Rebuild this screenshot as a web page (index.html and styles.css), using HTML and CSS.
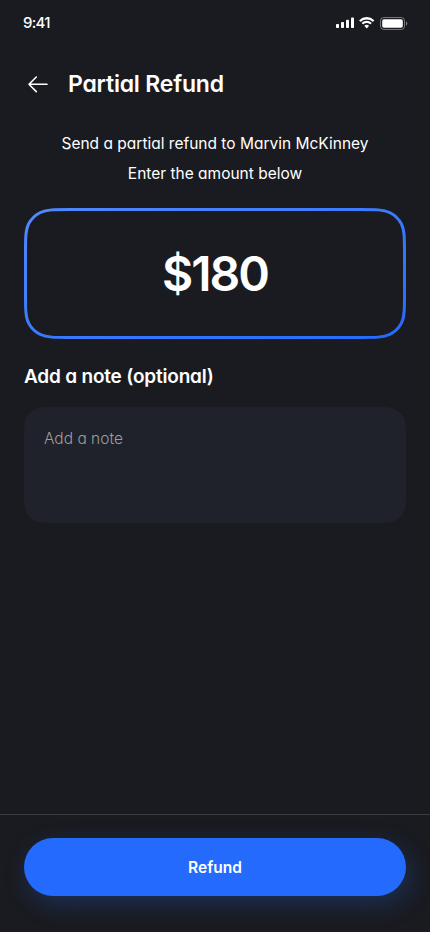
FILE: index.html
```html
<!DOCTYPE html>
<html lang="en">
<head>
<meta charset="utf-8">
<meta name="viewport" content="width=device-width, initial-scale=1">
<title>Partial Refund</title>
<link rel="stylesheet" href="styles.css">
</head>
<body>
<div class="screen">
  <header class="status">
    <span class="time">9:41</span>
    <svg class="status-icons" width="72" height="14" viewBox="0 0 72 14" fill="#fff">
      <rect x="0" y="8" width="3" height="4" rx=".8"/>
      <rect x="5" y="6" width="3" height="6" rx=".8"/>
      <rect x="10" y="3.7" width="3" height="8.3" rx=".8"/>
      <rect x="15" y="1.4" width="3" height="10.6" rx=".8"/>
      <path d="M30.7 3.4c2.2 0 4.3.85 5.9 2.35.12.12.3.12.43 0L38.2 4.6a.32.32 0 0 0 0-.46 10.8 10.8 0 0 0-15 0 .32.32 0 0 0 0 .46l1.17 1.15c.12.12.3.12.43 0A8.6 8.6 0 0 1 30.7 3.4Z"/>
      <path d="M30.7 7.1c1.2 0 2.37.45 3.26 1.25.12.12.32.12.44 0l1.15-1.17a.32.32 0 0 0 0-.47 7.1 7.1 0 0 0-9.7 0 .32.32 0 0 0 0 .47L27 8.35c.12.12.32.12.44 0A4.9 4.9 0 0 1 30.7 7.1Z"/>
      <path d="M32.95 9.65a.3.3 0 0 1 0 .46l-2 2.03a.33.33 0 0 1-.46 0l-2-2.03a.3.3 0 0 1 0-.46 3.45 3.45 0 0 1 4.46 0Z"/>
      <rect x="44.5" y="1.5" width="24" height="12" rx="3.3" fill="none" stroke="#fff" stroke-opacity=".4"/>
      <rect x="46.2" y="3.2" width="20.6" height="8.6" rx="1.8"/>
      <path d="M70 5.6v4c.8-.35 1.3-1.1 1.3-2s-.5-1.650-1.3-2Z" opacity=".45"/>
    </svg>
  </header>
  <nav class="titlebar">
    <svg width="20" height="18" viewBox="0 0 20 18" fill="none" stroke="#fff" stroke-width="1.6" stroke-linecap="round" stroke-linejoin="round">
      <path d="M19 9.300H1M8.300 2 1 9.300 8.300 16.600"/>
    </svg>
    <h1>Partial Refund</h1>
  </nav>
  <main>
    <p class="intro"><span class="line-one">Send a partial refund to Marvin McKinney</span><span class="line-two">Enter the amount below</span></p>
    <section class="amount">
      <svg class="shape" width="382" height="131" viewBox="0 0 382 131" fill="none">
        <defs><linearGradient id="edge" x1="1" y1="1" x2="0" y2="0"><stop stop-color="#246bfd"/><stop offset="1" stop-color="#5089ff"/></linearGradient></defs>
        <path stroke="url(#edge)" stroke-width="3" d="M1.500 46C1.500 30 1.500 22 4.600 15.900C7.300 10.800 11.300 7 16.400 4.500C22.500 1.500 30.500 1.500 46 1.500H336C351.500 1.500 359.500 1.500 365.600 4.500C370.700 7 374.700 10.800 377.400 15.900C380.500 22 380.500 30 380.500 46V85C380.500 101 380.500 109 377.400 115.100C374.700 120.200 370.700 124 365.600 126.500C359.500 129.500 351.500 129.500 336 129.500H46C30.500 129.500 22.500 129.500 16.400 126.500C11.300 124 7.300 120.200 4.600 115.100C1.500 109 1.500 101 1.500 85Z"/>
      </svg>
      <span class="value">$180</span>
    </section>
    <h2>Add a note (optional)</h2>
    <section class="note">
      <svg class="shape" width="382" height="116" viewBox="0 0 382 116">
        <path fill="#1f222a" d="M0 32C0 20.800 0 15.200 2.180 10.920C4.100 7.160 7.160 4.100 10.920 2.180C15.200 0 20.800 0 32 0H350C361.200 0 366.800 0 371.080 2.180C374.840 4.100 377.900 7.160 379.820 10.920C382 15.200 382 20.800 382 32V84C382 95.200 382 100.800 379.820 105.080C377.900 108.840 374.840 111.900 371.080 113.820C366.800 116 361.200 116 350 116H32C20.800 116 15.200 116 10.920 113.820C7.160 111.900 4.100 108.840 2.180 105.080C0 100.800 0 95.200 0 84Z"/>
      </svg>
      <span class="placeholder">Add a note</span>
    </section>
  </main>
  <footer>
    <button class="refund" type="button"><span>Refund</span></button>
  </footer>
</div>
</body>
</html>
```
FILE: styles.css
```css
* { box-sizing: border-box; }
body { margin: 0; background: #1a1b20; }
.screen {
  width: 430px;
  height: 932px;
  display: flex;
  flex-direction: column;
  overflow: hidden;
  background: #1a1b20;
  color: #fff;
  font-family: Inter, Lato, sans-serif;
  font-feature-settings: "cv11";
}
.status {
  height: 44px;
  padding: 1px 22px 0 23px;
  display: flex;
  align-items: center;
  justify-content: space-between;
}
.time { font-size: 15px; font-weight: 500; letter-spacing: -0.7px; }
.status-icons { display: block; }
.titlebar {
  height: 80px;
  padding-left: 28px;
  display: flex;
  align-items: center;
  gap: 20px;
}
h1 { margin: 0; font-size: 23px; line-height: 30px; font-weight: 600; letter-spacing: -0.2px; white-space: nowrap; }
main { flex: 1; padding: 5px 24px 0; }
.intro { margin: 0; font-size: 15.5px; line-height: 30px; font-weight: 400; text-align: center; }
.intro span { display: block; white-space: nowrap; }
.line-one { letter-spacing: 0; }
.amount {
  position: relative;
  height: 131px;
  margin-top: 19px;
  display: flex;
  align-items: center;
  justify-content: center;
}
.shape { position: absolute; inset: 0; display: block; }
.value { position: relative; font-size: 48px; font-weight: 600; letter-spacing: -2px; }
h2 { margin: 24px 0 0; height: 44px; font-size: 19px; line-height: 28px; font-weight: 600; letter-spacing: -0.2px; white-space: nowrap; }
h2, .placeholder { text-align: left; }
.note { position: relative; height: 116px; padding: 19px 20px; }
.placeholder { position: relative; display: inline-block; font-size: 15.5px; line-height: 26px; font-weight: 300; color: #9e9e9e; }
footer { height: 118px; border-top: 1px solid #3a3c42; padding: 23px 24px 0; }
.refund {
  display: flex;
  align-items: center;
  justify-content: center;
  width: 100%;
  height: 58px;
  padding: 0;
  border: 0;
  border-radius: 29px;
  background: #246bfd;
  color: #fff;
  font: inherit;
  font-size: 15.5px;
  font-weight: 600;
  box-shadow: 4px 8px 24px rgba(36, 107, 253, 0.25);
}
```
